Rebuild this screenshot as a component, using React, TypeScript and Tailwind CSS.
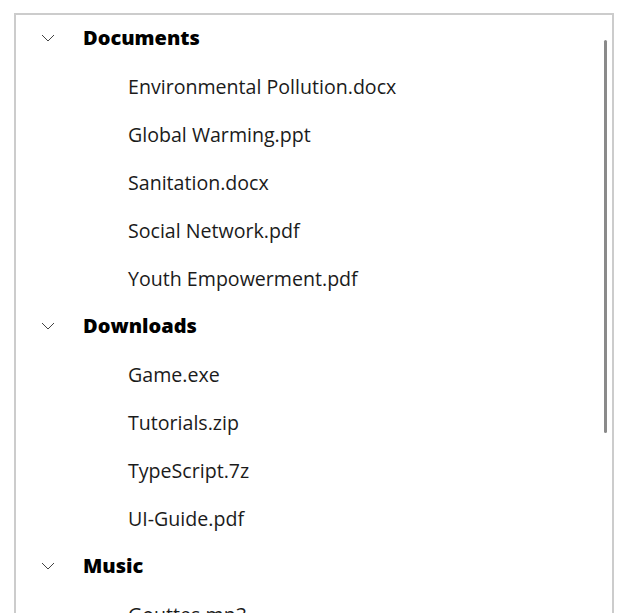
import React from "react";

type Folder = {
  name: string;
  files: string[];
};

const folders: Folder[] = [
  {
    name: "Documents",
    files: [
      "Environmental Pollution.docx",
      "Global Warming.ppt",
      "Sanitation.docx",
      "Social Network.pdf",
      "Youth Empowerment.pdf",
    ],
  },
  {
    name: "Downloads",
    files: ["Game.exe", "Tutorials.zip", "TypeScript.7z", "UI-Guide.pdf"],
  },
  {
    name: "Music",
    files: ["Gouttes.mp3"],
  },
];

const Chevron = () => (
  <svg width="14" height="8" viewBox="0 0 14 8" fill="none">
    <path d="M1 1l6 6 6-6" stroke="#444" strokeWidth="1" />
  </svg>
);

const App = () => {
  return (
    <div className="w-[634px] h-[613px] overflow-hidden bg-white pt-[13px] pl-[14px]">
      <div
        className="relative w-[600px] h-[620px] overflow-hidden border-2 border-[#cccccc] text-[#1b1b1b]"
        style={{ fontFamily: '"Open Sans", "Noto Sans", sans-serif' }}
      >
        <ul>
          {folders.map((folder) => (
            <li key={folder.name}>
              <div className="flex items-center h-12">
                <span className="w-[63px] mr-[4px] flex justify-center pb-[2px]">
                  <Chevron />
                </span>
                <span className="text-[20px] font-extrabold text-black pb-[2px]">
                  {folder.name}
                </span>
              </div>
              <ul>
                {folder.files.map((file) => (
                  <li
                    key={file}
                    className="flex items-center h-12 pl-[112px] text-[19.6px]"
                  >
                    {file}
                  </li>
                ))}
              </ul>
            </li>
          ))}
        </ul>
        <div className="absolute right-[5px] top-[25px] w-[3px] h-[393px] rounded-full bg-[#8a8a8a]" />
      </div>
    </div>
  );
};

export default App;
